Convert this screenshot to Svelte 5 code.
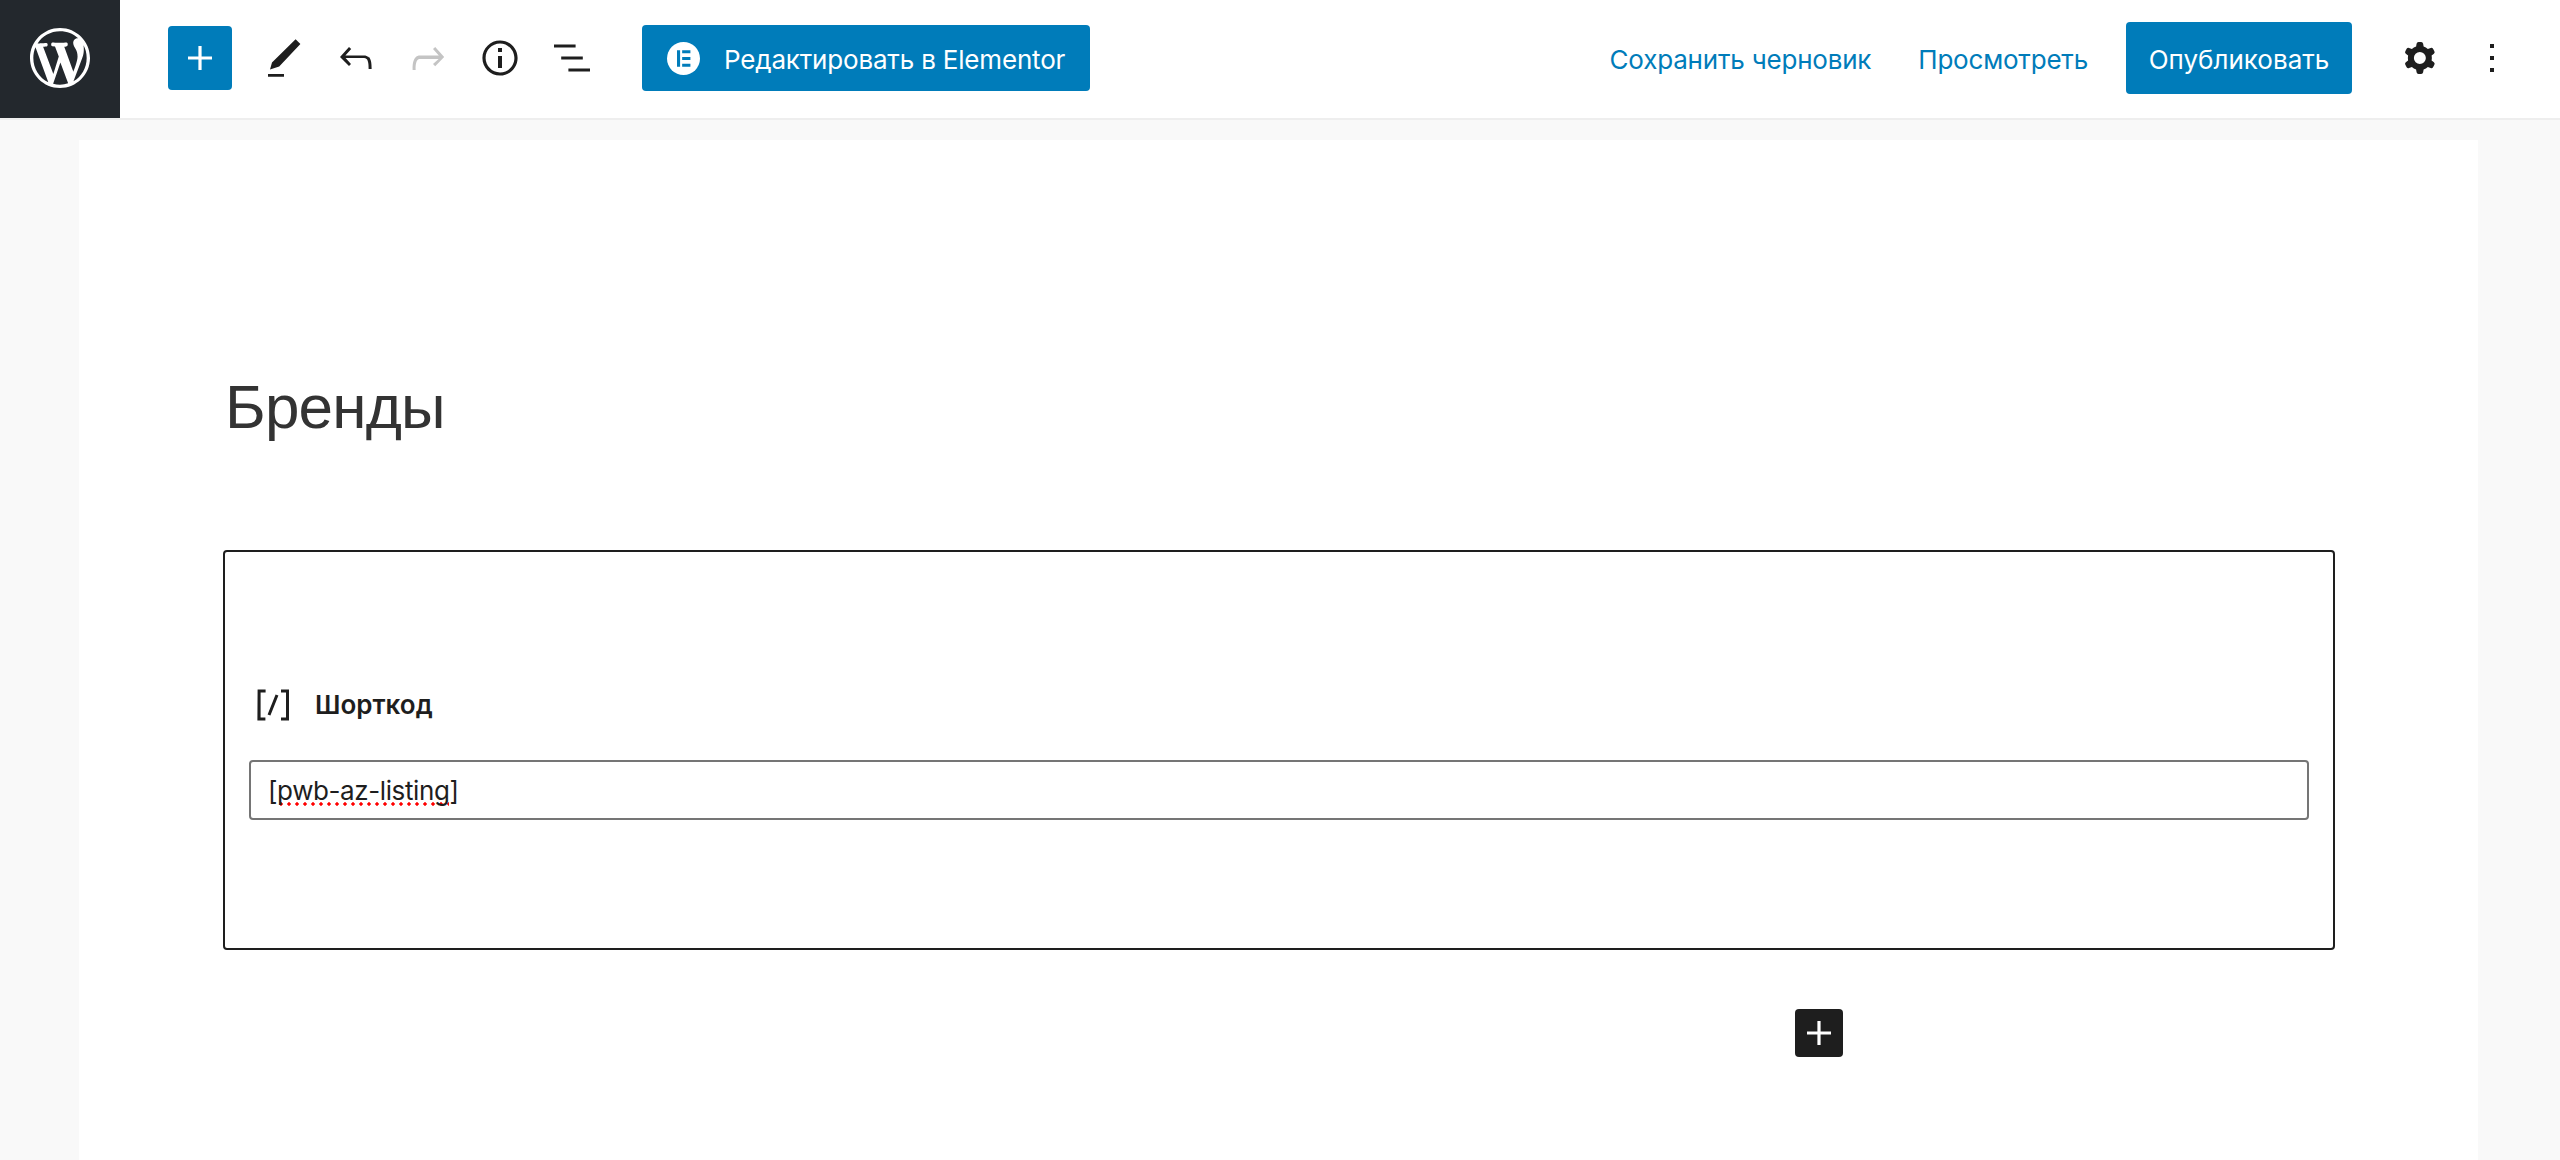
<script>
  const title = 'Бренды'
</script>

<div class="editor">
  <header class="topbar">
    <a class="wp-logo" href="#top" aria-label="WordPress">
      <svg viewBox="0 0 20 20" width="60" height="60" fill="#fff"><path d="M20 10c0-5.51-4.49-10-10-10C4.48 0 0 4.49 0 10c0 5.52 4.48 10 10 10 5.51 0 10-4.48 10-10zM7.78 15.37L4.37 6.22c.55-.02 1.17-.08 1.17-.08.5-.06.44-1.13-.06-1.11 0 0-1.45.11-2.37.11-.18 0-.37 0-.58-.01C4.12 2.69 6.87 1.11 10 1.11c2.33 0 4.45.87 6.05 2.34-.68-.11-1.65.39-1.65 1.58 0 .74.45 1.36.9 2.1.35.61.55 1.36.55 2.46 0 1.49-1.4 5-1.4 5l-3.03-8.37c.54-.02.82-.17.82-.17.5-.05.44-1.25-.06-1.22 0 0-1.44.12-2.38.12-.87 0-2.33-.12-2.33-.12-.5-.03-.56 1.2-.06 1.22l.92.08 1.26 3.41zM17.41 10c.24-.64.74-1.87.43-4.25.7 1.29 1.05 2.71 1.05 4.25 0 3.29-1.73 6.24-4.4 7.78.97-2.59 1.94-5.2 2.92-7.78zM6.1 18.09C3.12 16.65 1.11 13.53 1.11 10c0-1.3.23-2.48.72-3.59C3.25 10.3 4.67 14.2 6.1 18.09zm4.03-6.63l2.58 6.98c-.86.29-1.76.45-2.71.45-.79 0-1.57-.11-2.29-.33.81-2.38 1.62-4.74 2.42-7.1z"/></svg>
    </a>

    <div class="tools">
      <button class="inserter" aria-label="Добавить блок">
        <svg viewBox="0 0 24 24" width="48" height="48" fill="#fff"><path d="M18 11.2h-5.2V6h-1.6v5.2H6v1.6h5.2V18h1.6v-5.2H18z"/></svg>
      </button>
      <button class="icon" aria-label="Инструменты">
        <svg viewBox="0 0 24 24" width="48" height="48" fill="#1e1e1e"><path d="M4 20h8v1.4H4zM6 14.2 17.8 2.6 20.2 5 9.6 16.3 5 17.7z"/></svg>
      </button>
      <button class="icon" aria-label="Отменить">
        <svg viewBox="0 0 24 24" width="48" height="48" fill="#1e1e1e"><path d="M18.3 11.7c-.6-.6-1.4-.9-2.3-.9H6.7l2.9-3.3-1.1-1-4.5 5L8.5 16l1-1-2.7-3H16c.5 0 .9.2 1.3.5 1 1 1 3.4 1 4.5v.5h1.5v-.5c0-1.5 0-4.3-1.5-5.8z"/></svg>
      </button>
      <button class="icon" aria-label="Повторить">
        <svg viewBox="0 0 24 24" width="48" height="48" fill="#c4c4c4"><path d="M15.6 6.5l-1.1 1 2.9 3.3H8c-.9 0-1.7.3-2.3.9-1.4 1.5-1.4 4.2-1.4 5.8v.5h1.5v-.5c0-1.1 0-3.5 1-4.5.3-.3.7-.5 1.3-.5h9.2L14.5 15l1.1 1.1 4.5-4.6-4.5-5z"/></svg>
      </button>
      <button class="icon" aria-label="Сведения">
        <svg viewBox="0 0 24 24" width="48" height="48" fill="#1e1e1e"><path d="M12 3.2c-4.8 0-8.8 3.9-8.8 8.8 0 4.8 3.9 8.8 8.8 8.8 4.8 0 8.8-3.9 8.8-8.8 0-4.8-4-8.8-8.8-8.8zm0 16c-4 0-7.2-3.3-7.2-7.2C4.8 8 8 4.8 12 4.8s7.2 3.3 7.2 7.2c0 4-3.2 7.2-7.2 7.2zM11 17h2v-6h-2v6zm0-8h2V7h-2v2z"/></svg>
      </button>
      <button class="icon" aria-label="Список">
        <svg viewBox="0 0 24 24" width="48" height="48" fill="#1e1e1e"><path d="M13.8 5.2H3v1.5h10.8V5.2zm-3.6 12v1.5H21v-1.5H10.2zm7.2-6H6.6v1.5h10.8v-1.5z"/></svg>
      </button>
      <button class="elementor">
        <svg viewBox="0 0 32 32" width="33" height="33"><circle cx="16" cy="16" r="16" fill="#fff"/><path fill="#007cba" d="M9.7 8h3v16h-3zM14.7 8h8v3h-8zM14.7 14.5h8v3h-8zM14.7 21h8v3h-8z"/></svg>
        <span>Редактировать в Elementor</span>
      </button>
    </div>

    <div class="actions">
      <button class="link save">Сохранить черновик</button>
      <button class="link preview">Просмотреть</button>
      <button class="publish">Опубликовать</button>
      <button class="icon gear" aria-label="Настройки">
        <svg viewBox="0 0 24 24" width="48" height="48" fill="#1e1e1e"><path fill-rule="evenodd" d="M10.289 4.836A1 1 0 0 1 11.275 4h1.306a1 1 0 0 1 .987.836l.244 1.466c.787.26 1.503.679 2.108 1.218l1.393-.522a1 1 0 0 1 1.216.437l.653 1.13a1 1 0 0 1-.23 1.273l-1.148.944a6.025 6.025 0 0 1 0 2.435l1.149.946a1 1 0 0 1 .23 1.272l-.653 1.13a1 1 0 0 1-1.216.437l-1.394-.522c-.605.54-1.32.958-2.108 1.218l-.244 1.466a1 1 0 0 1-.987.836h-1.306a1 1 0 0 1-.986-.836l-.244-1.466a5.995 5.995 0 0 1-2.108-1.218l-1.394.522a1 1 0 0 1-1.217-.436l-.653-1.131a1 1 0 0 1 .23-1.272l1.149-.946a6.026 6.026 0 0 1 0-2.435l-1.148-.944a1 1 0 0 1-.23-1.272l.653-1.131a1 1 0 0 1 1.217-.437l1.393.522a5.994 5.994 0 0 1 2.108-1.218l.244-1.466ZM14.929 12a3 3 0 1 1-6 0 3 3 0 0 1 6 0Z"/></svg>
      </button>
      <button class="icon more" aria-label="Ещё">
        <svg viewBox="0 0 24 24" width="48" height="48" fill="#1e1e1e"><path d="M13 19h-2v-2h2v2zm0-6h-2v-2h2v2zm0-6h-2V5h2v2z"/></svg>
      </button>
    </div>
  </header>

  <main class="canvas">
    <div class="page">
      <h1>{title}</h1>

      <div class="block">
        <div class="label">
          <svg viewBox="0 0 24 24" width="48" height="48" fill="#1e1e1e"><path d="M16 4.2v1.5h2.5v12.5H16v1.5h4V4.2h-4zM4.2 19.8h4v-1.5H5.8V5.8h2.5V4.2h-4l-.1 15.6zm5.1-3.1l1.4.6 4-10-1.4-.6-4 10z"/></svg>
          <span>Шорткод</span>
        </div>
        <div class="input">[<span class="misspelled">pwb-az-listing</span>]</div>
      </div>

      <div class="appender">
        <button class="add" aria-label="Добавить блок">
          <svg viewBox="0 0 24 24" width="48" height="48" fill="#fff"><path d="M18 11.2h-5.2V6h-1.6v5.2H6v1.6h5.2V18h1.6v-5.2H18z"/></svg>
        </button>
      </div>
    </div>
  </main>
</div>

<style>
  :global(body) {
    background: #f9f9f9;
  }

  .editor {
    height: 1160px;
    display: flex;
    flex-direction: column;
    overflow: hidden;
    font-family: Inter, 'Noto Sans', sans-serif;
    color: #1e1e1e;
  }

  button {
    border: 0;
    padding: 0;
    background: none;
    font: inherit;
    cursor: pointer;
  }

  svg {
    display: block;
  }

  .topbar {
    flex: none;
    height: 118px;
    display: flex;
    align-items: center;
    background: #fff;
    border-bottom: 2px solid #eee;
  }

  .wp-logo {
    width: 120px;
    height: 116px;
    padding-bottom: 2px;
    display: flex;
    align-items: center;
    justify-content: center;
    background: #23282d;
  }

  .tools {
    display: flex;
    align-items: center;
    margin-left: 48px;
    margin-bottom: 2px;
  }

  .inserter {
    width: 64px;
    height: 64px;
    display: flex;
    align-items: center;
    justify-content: center;
    margin-right: 16px;
    background: #007cba;
    border-radius: 4px;
  }

  .icon {
    width: 72px;
    height: 72px;
    display: flex;
    align-items: center;
    justify-content: center;
  }

  .elementor {
    display: flex;
    align-items: center;
    height: 66px;
    width: 448px;
    margin-left: 34px;
    padding-left: 25px;
    gap: 24px;
    background: #007cba;
    border-radius: 4px;
    color: #fff;
    font-size: 26px;
    letter-spacing: -0.18px;
  }

  .elementor span {
    padding-top: 3px;
  }

  .actions {
    display: flex;
    align-items: center;
    margin-left: auto;
    margin-right: 32px;
    margin-bottom: 2px;
  }

  .link {
    color: #007cba;
    font-size: 26px;
    padding-top: 2px;
    letter-spacing: -0.2px;
  }

  .save {
    margin-right: 47px;
  }

  .preview {
    margin-right: 38px;
  }

  .publish {
    width: 226px;
    height: 72px;
    margin-right: 32px;
    padding-top: 2px;
    background: #007cba;
    border-radius: 4px;
    color: #fff;
    font-size: 26px;
  }

  .canvas {
    flex: 1;
    display: flex;
    padding: 20px 82px 0 79px;
    background: #f9f9f9;
  }

  .page {
    flex: 1;
    padding: 0 143px 0 144px;
    background: #fff;
  }

  h1 {
    margin: 231px 0 0 2px;
    font-family: 'Liberation Sans', Arial, sans-serif;
    font-size: 62px;
    line-height: 72px;
    font-weight: 400;
    letter-spacing: -0.8px;
    color: #333;
  }

  .block {
    height: 400px;
    box-sizing: border-box;
    margin-top: 107px;
    padding: 0 24px;
    display: flex;
    flex-direction: column;
    justify-content: center;
    border: 2px solid #1e1e1e;
    border-radius: 4px;
  }

  .label {
    display: flex;
    align-items: center;
    gap: 18px;
    margin-bottom: 31px;
    font-size: 26px;
    font-weight: 600;
  }

  .input {
    height: 60px;
    box-sizing: border-box;
    padding: 2px 17px 0;
    display: flex;
    align-items: center;
    border: 2px solid #757575;
    border-radius: 4px;
    font-size: 26px;
    letter-spacing: -0.4px;
    white-space: pre;
  }

  .misspelled {
    background-image: radial-gradient(circle, #f00 1.4px, transparent 2px);
    background-size: 8px 4px;
    background-repeat: repeat-x;
    background-position: 0 100%;
  }

  .appender {
    margin-top: 59px;
    padding-left: 1572px;
  }

  .add {
    width: 48px;
    height: 48px;
    display: block;
    background: #1e1e1e;
    border-radius: 4px;
  }
</style>
